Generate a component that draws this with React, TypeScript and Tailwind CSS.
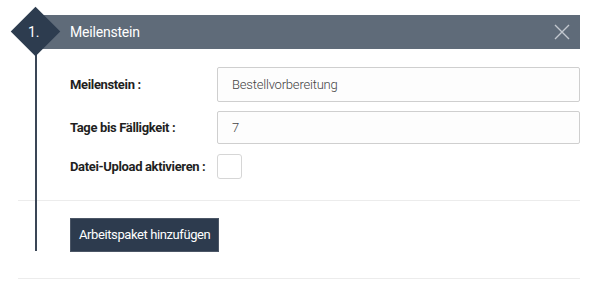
import { FC } from 'react';

const font = { fontFamily: 'Roboto, "Liberation Sans", sans-serif' };

const FieldRow: FC<{ label: string; children: React.ReactNode; className?: string }> = ({
  label,
  children,
  className,
}) => {
  return (
    <div className={`flex items-center ${className ?? ''}`}>
      <label className="w-[147px] shrink-0 text-[13px] font-bold tracking-[-0.35px] text-[#1f1f1f]">
        {label}
      </label>
      {children}
    </div>
  );
};

const App: FC = () => {
  return (
    <div className="relative h-[281px] w-[590px] overflow-hidden bg-white pl-[18px] pr-[10px] pt-[15px]" style={font}>
      {/* timeline line + number badge */}
      <div className="absolute left-[35px] top-[50px] h-[201px] w-[2px] bg-[#3a4656]" />
      <div className="absolute left-[18px] top-[14px] h-[35px] w-[35px] rotate-45 bg-[#2d3c4f]" />
      <span className="absolute left-[28px] top-[22px] text-[14px] leading-[20px] text-white">1.</span>

      <div className="ml-[18px] flex h-[34px] items-center justify-between bg-[#5f6b79] pl-[34px] pr-[10px]">
        <span className="text-[14px] tracking-[-0.2px] text-white">Meilenstein</span>
        <svg width="16" height="16" viewBox="0 0 16 16" className="text-[#c3c8cf]">
          <path d="M1 1L15 15M15 1L1 15" stroke="currentColor" strokeWidth="1.4" />
        </svg>
      </div>

      <div className="pl-[52px] pt-[18px]">
        <FieldRow label="Meilenstein :">
          <input
            readOnly
            value="Bestellvorbereitung"
            className="h-[35px] flex-1 rounded-[2px] border border-[#cfcfcf] bg-[#fdfdfd] px-[14px] text-[13px] font-light tracking-[-0.2px] text-[#444] outline-none"
          />
        </FieldRow>
        <FieldRow label="Tage bis Fälligkeit :" className="mt-[9px]">
          <input
            readOnly
            value="7"
            className="h-[33px] flex-1 rounded-[2px] border border-[#cfcfcf] bg-[#fdfdfd] px-[14px] text-[13px] font-light text-[#444] outline-none"
          />
        </FieldRow>
        <FieldRow label="Datei-Upload aktivieren :" className="mt-[10px]">
          <div className="h-[25px] w-[25px] rounded-[3px] border border-[#d6d6d6] bg-white" />
        </FieldRow>
      </div>

      <div className="mt-[21px] border-t border-[#ececec]" />

      <div className="pl-[52px] pt-[17px]">
        <button className="h-[34px] border border-[#4b5666] bg-[#2d3b4e] px-[8px] text-[13px] tracking-[-0.4px] text-white">
          Arbeitspaket hinzufügen
        </button>
      </div>

      <div className="mt-[26px] border-t border-[#ececec]" />
    </div>
  );
};

export default App;
